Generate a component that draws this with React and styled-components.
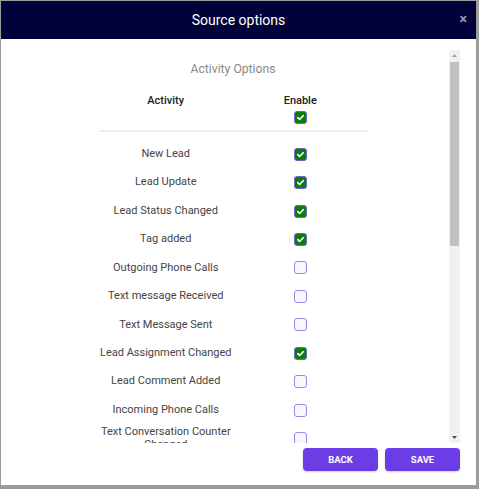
import styled, { createGlobalStyle } from "styled-components";

const GlobalStyle = createGlobalStyle`
  * { box-sizing: border-box; }
  body {
    margin: 0;
    background: #9c9c9c;
    font-family: Roboto, "Liberation Sans", Arial, sans-serif;
  }
`;

const activities = [
  { nome: "New Lead", ativo: true },
  { nome: "Lead Update", ativo: true },
  { nome: "Lead Status Changed", ativo: true },
  { nome: "Tag added", ativo: true },
  { nome: "Outgoing Phone Calls", ativo: false },
  { nome: "Text message Received", ativo: false },
  { nome: "Text Message Sent", ativo: false },
  { nome: "Lead Assignment Changed", ativo: true },
  { nome: "Lead Comment Added", ativo: false },
  { nome: "Incoming Phone Calls", ativo: false },
  { nome: "Text Conversation Counter Changed", ativo: false },
];

const Modal = styled.div`
  margin: 1px 0 0 1px;
  width: 475px;
  height: 484px;
  background: #ffffff;
  display: flex;
  flex-direction: column;
`;

const Cabecalho = styled.div`
  height: 38px;
  flex-shrink: 0;
  background: #02023a;
  display: flex;
  align-items: center;
  justify-content: center;
  position: relative;
`;

const Titulo = styled.h1`
  margin: 0;
  font-size: 14px;
  font-weight: 400;
  color: #ffffff;
`;

const BotaoFechar = styled.span`
  position: absolute;
  right: 9px;
  top: 11px;
  font-size: 14px;
  font-weight: 700;
  line-height: 14px;
  color: #9a9aa8;
`;

const Corpo = styled.div`
  flex: 1;
  min-height: 0;
  padding: 11px 16px 14px;
  display: flex;
  flex-direction: column;
`;

const Janela = styled.div`
  flex: 1;
  min-height: 0;
  display: flex;
`;

const Conteudo = styled.div`
  flex: 1;
  min-width: 0;
  overflow: hidden;
`;

const BarraRolagem = styled.div`
  width: 11px;
  flex-shrink: 0;
  background: #f1f1f1;
  display: flex;
  flex-direction: column;
`;

const SetaRolagem = styled.div`
  height: 11px;
  flex-shrink: 0;
  display: flex;
  align-items: center;
  justify-content: center;
`;

const Trilho = styled.div`
  flex: 1;
  padding: 1px 1px 0;
`;

const Polegar = styled.div`
  height: 184px;
  background: #c1c1c1;
`;

const Subtitulo = styled.h2`
  margin: 12px 0 10px;
  font-size: 12.2px;
  line-height: 14px;
  font-weight: 400;
  color: #8a8a8a;
  text-align: center;
`;

const Tabela = styled.div`
  width: 269px;
  margin: 0 auto;
`;

const LinhaCabecalho = styled.div`
  display: grid;
  grid-template-columns: 1fr 1fr;
  padding: 8px 0 6px;
  border-bottom: 2px solid #eeeeee;
`;

const CelulaCabecalho = styled.div`
  display: flex;
  flex-direction: column;
  align-items: center;
  gap: 4px;
  font-size: 11px;
  line-height: 13px;
  font-weight: 500;
  color: #222222;
`;

const Lista = styled.div`
  padding-top: 8px;
`;

const Linha = styled.div`
  display: grid;
  grid-template-columns: 1fr 1fr;
  align-items: center;
  min-height: 28.45px;
`;

const NomeAtividade = styled.span`
  font-size: 11px;
  line-height: 12.5px;
  color: #444444;
  text-align: center;
`;

const CelulaCheck = styled.div`
  display: flex;
  justify-content: center;
`;

const Caixa = styled.span`
  width: 13px;
  height: 13px;
  border-radius: 3px;
  display: flex;
  align-items: center;
  justify-content: center;
  background: ${(p) => (p.$ativo ? "#0a7d0a" : "#f8f7fc")};
  border: 1px solid ${(p) => (p.$ativo ? "#6f63d8" : "#9b86ee")};
`;

const Rodape = styled.div`
  display: flex;
  justify-content: flex-end;
  gap: 7px;
  margin-top: 5px;
`;

const Botao = styled.button`
  width: 75px;
  height: 23px;
  border: none;
  border-radius: 4px;
  background: #6a3de6;
  color: #ffffff;
  font-family: Roboto, "Liberation Sans", Arial, sans-serif;
  font-size: 9.5px;
  font-weight: 700;
  box-shadow: 0 1px 2px rgba(0, 0, 0, 0.2);
`;

const Checkbox = ({ ativo }) => (
  <Caixa $ativo={ativo}>
    {ativo && (
      <svg width="9" height="9" viewBox="0 0 10 10">
        <path
          d="M2 5.2l2 2 4-4.2"
          fill="none"
          stroke="#ffffff"
          strokeWidth="1.8"
          strokeLinecap="round"
          strokeLinejoin="round"
        />
      </svg>
    )}
  </Caixa>
);

const App = () => {
  return (
    <>
      <GlobalStyle />
      <Modal>
        <Cabecalho>
          <Titulo>Source options</Titulo>
          <BotaoFechar>×</BotaoFechar>
        </Cabecalho>
        <Corpo>
          <Janela>
            <Conteudo>
              <Subtitulo>Activity Options</Subtitulo>
              <Tabela>
                <LinhaCabecalho>
                  <CelulaCabecalho>Activity</CelulaCabecalho>
                  <CelulaCabecalho>
                    Enable
                    <Checkbox ativo />
                  </CelulaCabecalho>
                </LinhaCabecalho>
                <Lista>
                  {activities.map((a) => (
                    <Linha key={a.nome}>
                      <NomeAtividade>{a.nome}</NomeAtividade>
                      <CelulaCheck>
                        <Checkbox ativo={a.ativo} />
                      </CelulaCheck>
                    </Linha>
                  ))}
                </Lista>
              </Tabela>
            </Conteudo>
            <BarraRolagem>
              <SetaRolagem>
                <svg width="5" height="3" viewBox="0 0 5 3">
                  <path d="M0 3h5L2.5 0z" fill="#a3a3a3" />
                </svg>
              </SetaRolagem>
              <Trilho>
                <Polegar />
              </Trilho>
              <SetaRolagem>
                <svg width="5" height="3" viewBox="0 0 5 3">
                  <path d="M0 0h5L2.5 3z" fill="#505050" />
                </svg>
              </SetaRolagem>
            </BarraRolagem>
          </Janela>
          <Rodape>
            <Botao>BACK</Botao>
            <Botao>SAVE</Botao>
          </Rodape>
        </Corpo>
      </Modal>
    </>
  );
};

export default App;
